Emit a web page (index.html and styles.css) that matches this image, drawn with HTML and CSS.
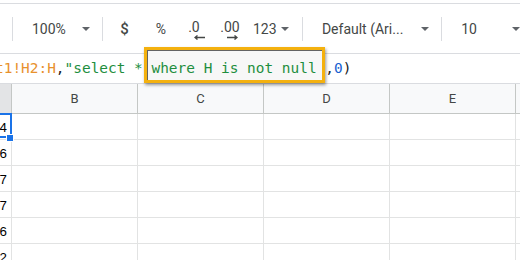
FILE: index.html
```html
<!DOCTYPE html>
<html>
<head>
<meta charset="utf-8">
<link rel="stylesheet" href="styles.css">
</head>
<body>

<div class="toolbar">
  <span class="sep first"></span>
  <span class="zoom">100%</span>
  <span class="caret zoom-caret"></span>
  <span class="sep s2"></span>
  <span class="btn dollar">$</span>
  <span class="btn pct">%</span>
  <span class="btn dec">
    <span class="dec-txt">.0</span>
    <svg class="arrow left" width="11" height="5" viewBox="0 0 11 5"><path d="M11 2.5H2M3.5 0.5L1 2.5 3.5 4.5" fill="none" stroke="#444746" stroke-width="1.4"/></svg>
  </span>
  <span class="btn inc">
    <span class="dec-txt">.00</span>
    <svg class="arrow right" width="11" height="5" viewBox="0 0 11 5"><path d="M0 2.5H9M7.5 0.5L10 2.5 7.5 4.5" fill="none" stroke="#444746" stroke-width="1.4"/></svg>
  </span>
  <span class="btn fmt">123<span class="caret small"></span></span>
  <span class="sep s3"></span>
  <span class="font">Default (Ari...</span>
  <span class="caret font-caret"></span>
  <span class="sep s4"></span>
  <span class="size">10</span>
  <span class="caret size-caret"></span>
</div>

<div class="formula"><span class="ftext"><span class="ref">t1!H2:H</span>,<span class="str">"select * </span><span class="hl"><span class="str">where H is not null</span></span>,<span class="num">0</span>)</span></div>

<div class="grid">
  <div class="hd sel-col"></div>
  <div class="hd">B</div>
  <div class="hd">C</div>
  <div class="hd">D</div>
  <div class="hd">E</div>
  <div class="hd"></div>

  <div class="c a active">4</div><div class="c"></div><div class="c"></div><div class="c"></div><div class="c"></div><div class="c"></div>
  <div class="c a">6</div><div class="c"></div><div class="c"></div><div class="c"></div><div class="c"></div><div class="c"></div>
  <div class="c a">7</div><div class="c"></div><div class="c"></div><div class="c"></div><div class="c"></div><div class="c"></div>
  <div class="c a">7</div><div class="c"></div><div class="c"></div><div class="c"></div><div class="c"></div><div class="c"></div>
  <div class="c a">6</div><div class="c"></div><div class="c"></div><div class="c"></div><div class="c"></div><div class="c"></div>
  <div class="c a">2</div><div class="c"></div><div class="c"></div><div class="c"></div><div class="c"></div><div class="c"></div>
</div>

</body>
</html>
```

FILE: styles.css
```css
html, body {
	margin: 0;
	background: #fff;
	overflow: hidden;
}
body {
	font-family: Roboto, "Liberation Sans", sans-serif;
	color: #444746;
}

/* toolbar */
.toolbar {
	margin-top: 3px;
	height: 49px;
	border-top: 1px solid #dadce0;
	border-bottom: 1px solid #dadce0;
	display: flex;
	align-items: center;
	font-size: 14px;
	white-space: nowrap;
}
.sep {
	width: 1px;
	height: 24px;
	background: #dadce0;
	flex: none;
}
.sep.first { margin-left: 12px; }
.zoom { margin-left: 19px; width: 36px; }
.caret {
	flex: none;
	width: 0;
	height: 0;
	border-left: 4px solid transparent;
	border-right: 4px solid transparent;
	border-top: 4px solid #5f6368;
}
.zoom-caret { margin-left: 15px; }
.sep.s2 { margin-left: 12px; }
.btn {
	flex: none;
	display: flex;
	justify-content: center;
	align-items: center;
	width: 28px;
	height: 30px;
	position: relative;
}
.dollar { margin-left: 8px; width: 27px; font-size: 15px; font-weight: 500; }
.pct { margin-left: 10px; width: 26px; }
.dec { margin-left: 6px; }
.inc { margin-left: 8px; }
.dec-txt { margin-top: -3px; }
.arrow {
	position: absolute;
	top: 21px;
}
.arrow.left { left: 14px; }
.arrow.right { left: 11px; }
.fmt {
	margin-left: 9px;
	width: 35px;
	justify-content: flex-start;
}
.caret.small { margin-left: 4px; }
.sep.s3 { margin-left: 14px; }
.font { margin-left: 19px; width: 88px; overflow: hidden; }
.font-caret { margin-left: 14px; }
.sep.s4 { margin-left: 12px; }
.size { margin-left: 19px; width: 16px; }
.size-caret { margin-left: 35px; }

/* formula bar */
.formula {
	height: 29px;
	line-height: 29px;
	border-bottom: 1px solid #dadce0;
	white-space: nowrap;
	font-family: "DejaVu Sans Mono", "Liberation Mono", monospace;
	font-size: 14.45px;
	color: #202124;
	position: relative;
	z-index: 1;
}
.ftext { margin-left: -5px; }
.ref { color: #e8912d; }
.str { color: #1e8e3e; }
.num { color: #1a5fd0; }
.hl {
	background: #f7f7f7;
	border: 3px solid #f4b10f;
	padding: 10px 5px 4px 4.6px;
	margin-left: -7.6px;
	margin-right: 0.7px;
	box-shadow: inset 1px 1px 0 rgba(0,0,0,.6), 1px 2px 3px rgba(0,0,0,.4);
}

/* grid */
.grid {
	display: grid;
	grid-template-columns: 11px 126px 126px 126px 126px 1fr;
}
.hd {
	height: 29px;
	background: #f8f9fa;
	border-left: 1px solid #c4c7c5;
	border-bottom: 1px solid #c4c7c5;
	font-size: 13px;
	display: flex;
	align-items: center;
	justify-content: center;
	color: #444746;
}
.hd.sel-col {
	background: #e3e4e6;
	border-left: none;
}
.c {
	height: 25px;
	border-left: 1px solid #e2e3e3;
	border-bottom: 1px solid #e2e3e3;
}
.c.a {
	border-left: none;
	font-family: "Liberation Sans", Arial, sans-serif;
	font-size: 13.33px;
	color: #000;
	display: flex;
	align-items: flex-end;
	justify-content: flex-end;
	padding-right: 4px;
	padding-bottom: 4px;
	height: 21px;
	line-height: 15px;
}
.c.active { position: relative; }
.c.active::before {
	content: "";
	position: absolute;
	left: -10px;
	top: -1px;
	right: -1px;
	bottom: 1px;
	border: 2px solid #1a73e8;
}
.c.active::after {
	content: "";
	position: absolute;
	right: -3px;
	bottom: -3px;
	width: 6px;
	height: 6px;
	background: #1a73e8;
	border: 1px solid #fff;
}
```
